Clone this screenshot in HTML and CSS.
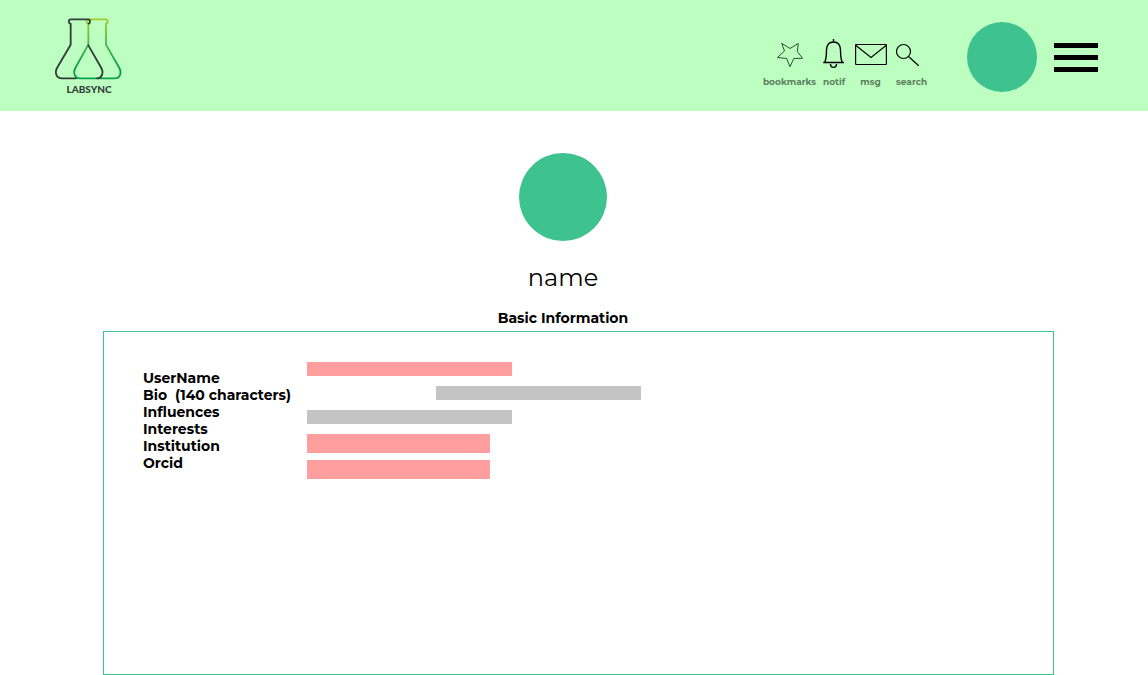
FILE: index.html
```html
<!DOCTYPE html>
<html lang="en">
<head>
<meta charset="utf-8">
<title>LabSync profile</title>
<link rel="stylesheet" href="styles.css">
</head>
<body>
<header class="topbar">
  <a class="logo" href="#">
    <svg class="logo-mark" viewBox="17 24 204 192" fill="none" stroke-width="5.5" stroke-linecap="round" stroke-linejoin="round" aria-hidden="true">
      <defs>
        <linearGradient id="leaf" gradientUnits="userSpaceOnUse" x1="0" y1="27" x2="0" y2="205">
          <stop offset="0" stop-color="#a3cc29"/>
          <stop offset="0.4" stop-color="#4cb749"/>
          <stop offset="0.8" stop-color="#0ba14b"/>
        </linearGradient>
      </defs>
      <path stroke="url(#leaf)" d="M115 41C109 38 110 28 118 28H169C177 28 177 38 171 41M117 41V104L78 174C70 189 77 205 92 205H196C212 205 218 189 210 174L170 104V41"/>
      <path stroke="#333c38" d="M62 41C57 38 57 28 64 28H116C124 28 123 39 118 41M64 41V104L23 174C15 189 22 205 38 205H80M117 106 156 174C164 189 157 205 143 205"/>
    </svg>
    <span class="logo-text">LABSYNC</span>
  </a>
  <nav class="tools" aria-label="Tools">
    <button class="tool tool-bookmarks" type="button">
      <svg class="tool-icon" width="27" height="30" viewBox="0 0 27 30" fill="none" stroke="#1d3a20" stroke-width="0.9" aria-hidden="true"><path d="M5.700 4.300 14 9.500 22.300 4.500 21.300 12.500 26.600 19.300 17.800 19.500 14 27.700 10.700 19.500 1.400 18.500 8.500 12Z"/></svg>
      <span>bookmarks</span>
    </button>
    <button class="tool tool-notif" type="button">
      <svg class="tool-icon" width="22" height="30" viewBox="0 0 22 30" fill="none" stroke="#000" stroke-width="1.400" aria-hidden="true"><path d="M10.500 0V3M.2 23.500H21M1.500 23.500C3.500 20 3.300 17 3.500 11C3.700 5.500 6.500 3 10.500 3S17.300 5.500 17.500 11C17.700 17 17.500 20 19.500 23.500M7.500 25C7.500 29.500 13.500 29.500 13.500 25"/></svg>
      <span>notif</span>
    </button>
    <button class="tool tool-msg" type="button">
      <svg class="tool-icon" width="32" height="30" viewBox="0 0 32 30" fill="none" stroke="#000" stroke-width="1.200" aria-hidden="true"><rect x=".6" y="5.500" width="30.800" height="20" rx=".5"/><path d="M1 6.500 16 18.500 31 6.500"/></svg>
      <span>msg</span>
    </button>
    <button class="tool tool-search" type="button">
      <svg class="tool-icon" width="24" height="30" viewBox="0 0 24 30" fill="none" stroke="#000" stroke-width="1.200" aria-hidden="true"><circle cx="7.500" cy="12.500" r="7"/><path d="M12.500 17.500 22.700 26.700"/></svg>
      <span>search</span>
    </button>
  </nav>
  <button class="avatar" type="button" aria-label="Profile"></button>
  <button class="menu" type="button" aria-label="Menu">
    <span class="menu-bar"></span>
    <span class="menu-bar"></span>
    <span class="menu-bar"></span>
  </button>
</header>
<main class="page">
  <section class="profile">
    <div class="portrait"></div>
    <h1 class="name">name</h1>
    <h2 class="section-title">Basic Information</h2>
  </section>
  <form class="panel">
    <div class="labels">
      <label for="username">UserName</label>
      <label for="bio">Bio  (140 characters)</label>
      <label for="influences">Influences</label>
      <span>Interests</span>
      <label for="institution">Institution</label>
      <label for="orcid">Orcid</label>
    </div>
    <div class="fields">
      <input class="field field-pink" id="username" type="text">
      <input class="field field-grey field-shifted" id="bio" type="text" maxlength="140">
      <input class="field field-grey" id="influences" type="text">
      <div class="field-pair">
        <input class="field field-pink field-tall" id="institution" type="text">
        <input class="field field-pink field-tall" id="orcid" type="text">
      </div>
    </div>
  </form>
</main>
</body>
</html>
```
FILE: styles.css
```css
* {
  box-sizing: border-box;
}

body {
  display: flex;
  flex-direction: column;
  min-height: 100vh;
  margin: 0;
  background: #fff;
  color: #000;
  font-family: Montserrat, Inter, sans-serif;
}

button {
  padding: 0;
  border: 0;
  background: none;
  font: inherit;
  cursor: pointer;
}

.topbar {
  display: flex;
  align-items: center;
  padding: 18px 50px 15px 55px;
  background: #bcffc1;
}

.logo {
  display: flex;
  flex-direction: column;
  align-items: center;
  margin-right: auto;
  height: 78px;
  color: #333c38;
  text-decoration: none;
}

.logo-mark {
  width: 68px;
  height: 64px;
}

.logo-text {
  font-family: Lato, sans-serif;
  font-size: 10px;
  font-weight: 900;
  line-height: 14px;
}

.tools {
  display: flex;
  align-self: flex-start;
  gap: 7px;
  margin: 21px 39px 0 0;
}

.tool {
  display: flex;
  flex-direction: column;
  align-items: center;
  gap: 7px;
  color: #5e8061;
  font-size: 9px;
  font-weight: 700;
  line-height: 12px;
}

.tool-bookmarks {
  width: 53px;
}

.tool-notif {
  width: 22px;
}

.tool-msg {
  width: 37px;
}

.tool-search {
  align-items: flex-start;
  width: 32px;
}

.avatar {
  width: 70px;
  height: 70px;
  margin-right: 17px;
  border-radius: 50%;
  background: #3ec28f;
}

.menu {
  display: flex;
  flex-direction: column;
  gap: 7px;
  width: 44px;
}

.menu-bar {
  height: 5px;
  background: #000;
}

.page {
  display: flex;
  flex: 1;
  flex-direction: column;
  padding: 42px 94px 0 103px;
}

.profile {
  display: flex;
  flex-direction: column;
  align-items: center;
  padding-right: 31px;
}

.portrait {
  width: 88px;
  height: 88px;
  border-radius: 50%;
  background: #3ec28f;
}

.name {
  margin: 21px 0 15px;
  font-size: 24px;
  font-weight: 400;
  line-height: 32px;
}

.section-title {
  margin: 0 0 4px;
  font-size: 14px;
  font-weight: 700;
  line-height: 18px;
}

.panel {
  display: grid;
  flex: 1;
  grid-template-columns: 164px 1fr;
  align-items: start;
  padding: 30px 39px;
  border: 1px solid #3ec28f;
}

.labels {
  display: flex;
  flex-direction: column;
  padding-top: 8px;
  font-size: 14px;
  font-weight: 700;
  line-height: 17px;
  white-space: pre;
}

.fields {
  display: flex;
  flex-direction: column;
  gap: 10px;
}

.field {
  width: 205px;
  height: 14px;
  padding: 0 4px;
  border: 0;
  font: inherit;
  font-size: 12px;
}

.field-pink {
  background: #ff9e9e;
}

.field-grey {
  background: #c4c4c4;
}

.field-shifted {
  margin-left: 129px;
}

.field-pair {
  display: flex;
  flex-direction: column;
  gap: 7px;
}

.field-tall {
  width: 183px;
  height: 19px;
}
```
